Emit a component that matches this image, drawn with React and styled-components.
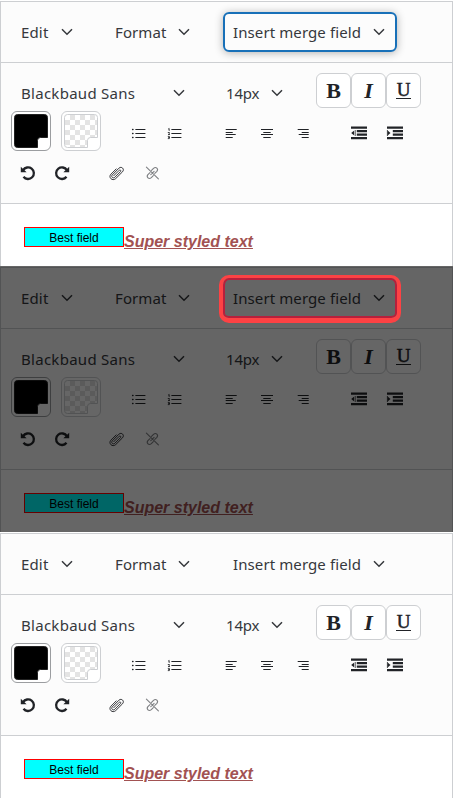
import React from 'react';
import styled, { createGlobalStyle, css } from 'styled-components';

const GlobalStyle = createGlobalStyle`
  * { box-sizing: border-box; }
  body { margin: 0; background: #fff; overflow: hidden; }
`;

const Page = styled.main`
  width: 453px;
  height: 798px;
  overflow: hidden;
  font-family: 'Noto Sans', 'Open Sans', sans-serif;
  color: #212327;
`;

const Panel = styled.section`
  position: relative;
  height: 266px;
  padding-top: 1px;
`;

const Frame = styled.div`
  display: flex;
  flex-direction: column;
  height: 265px;
  border: solid #cdcfd2;
  border-width: 1px 1px 0;
`;

const MenuBar = styled.div`
  display: flex;
  align-items: center;
  height: 61px;
  padding-left: 10px;
  background: #fcfcfc;
  border-bottom: 1px solid #cdcfd2;
`;

const MenuButton = styled.button`
  display: flex;
  align-items: center;
  justify-content: space-between;
  flex: none;
  width: ${(p) => p.$width}px;
  height: 40px;
  margin: 0 ${(p) => p.$after || 0}px 0 0;
  padding: 0 10px 0 8px;
  border: 2px solid transparent;
  border-radius: 6px;
  background: none;
  color: #36383c;
  font: 400 15px/20px 'Noto Sans', 'Open Sans', sans-serif;
  letter-spacing: ${(p) => p.$tracking || 0}px;
  white-space: nowrap;
  ${(p) => p.$focused && css`
    border-color: #1870b8;
    box-shadow: 0 1px 8px rgba(0, 0, 0, 0.3);
  `}
`;

const Toolbar = styled.div`
  height: 141px;
  padding: 11px 0 0 10px;
  background: #fcfcfc;
  border-bottom: 1px solid #cdcfd2;
`;

const FontRow = styled.div`
  display: flex;
  align-items: center;
  height: 38px;
  margin-bottom: -1px;
`;

const FormatGroup = styled.div`
  display: flex;
  height: 35px;
  margin: -5px 0 0 21px;
`;

const FormatButton = styled.button`
  width: 35px;
  height: 35px;
  padding: 0;
  border: 1px solid #cdcfd2;
  border-radius: 6px;
  background: #fff;
  color: #212327;
  font: ${(p) => p.$face} 'Liberation Serif', serif;
  -webkit-text-stroke: ${(p) => p.$stroke || 0}px #212327;
`;

const Underlined = styled.span`
  display: block;
  width: 15px;
  height: 18px;
  margin: -2px auto 0;
  border-bottom: 1px solid #212327;
  line-height: 17px;
  text-align: center;
`;

const ToolRow = styled.div`
  display: flex;
  align-items: center;
  height: 40px;
`;

const Tool = styled.button`
  display: flex;
  flex: none;
  width: 36px;
  height: 36px;
  margin: 0 0 0 ${(p) => p.$before || 0}px;
  padding: 12px 10px 8px;
  border: 0;
  background: none;
  color: ${(p) => (p.$muted ? '#7d7f82' : '#212327')};
`;

const SwatchButton = styled.button`
  flex: none;
  width: 40px;
  height: 40px;
  margin: 0 10px 0 0;
  padding: 2px;
  border: 1px solid ${(p) => (p.$filled ? '#9b9da0' : '#cdcfd2')};
  border-radius: 6px;
  background: #fff;
`;

const Editor = styled.div`
  display: flex;
  align-items: flex-start;
  flex: 1;
  padding: 23px 0 0 23px;
  background: #fff;
  font-family: 'Liberation Sans', Arial, sans-serif;
`;

const MergeField = styled.span`
  width: 100px;
  height: 20px;
  border: 1px solid #f00;
  background: #0ff;
  color: #000;
  font-size: 12px;
  line-height: 20px;
  text-align: center;
`;

const StyledText = styled.span`
  margin-top: 5px;
  color: #a25252;
  font-size: 16px;
  font-style: italic;
  font-weight: 700;
  line-height: 19px;
  text-decoration: underline;
`;

const Shade = styled.div`
  position: absolute;
  inset: 0;
  background: rgba(0, 0, 0, 0.6);
`;

const Highlight = styled.div`
  position: absolute;
  left: 219px;
  top: 9px;
  width: 182px;
  height: 48px;
  border: solid #fd4244;
  border-width: 3px 4px 5px;
  border-radius: 10px;
  box-shadow: inset 0 0 0 2px #b6203c;
`;

const Svg = styled.svg`
  display: block;
  flex: none;
  overflow: visible;
`;

const Chevron = () => (
  <Svg width="12" height="8" viewBox="0 0 12 8" fill="none" stroke="currentColor" strokeWidth="1.5">
    <path d="M1 1.3l5 5 5-5" />
  </Svg>
);

const Icon = ({ children }) => (
  <Svg width="16" height="16" viewBox="0 0 16 16" fill="none" stroke="currentColor" strokeLinecap="round" strokeLinejoin="round">
    {children}
  </Svg>
);

const listLines = <path d="M5.8 4.5H15M5.8 8.5H15M5.8 12.5H15" strokeWidth="1.1" />;

const BulletList = () => (
  <Icon>
    {listLines}
    <path d="M2.6 4.5h.4M2.6 8.5h.4M2.6 12.5h.4" strokeWidth="1.4" />
  </Icon>
);

const NumberList = () => (
  <Icon>
    {listLines}
    <path d="M2.4 4l.8-.5v2M2.2 7.5h1.2v1L2.2 9.5h1.4M2.2 11.4h1.2v2.2H2.2M2.6 12.5h.8" strokeWidth=".85" />
  </Icon>
);

const AlignIcon = ({ d }) => (
  <Icon><path d={d} strokeWidth="1.1" strokeLinecap="butt" /></Icon>
);

const indentBars = (
  <path d="M0 2.6h16M5.8 6.1h10.2M5.8 9.6h10.2M0 13.1h16" strokeWidth="2.2" strokeLinecap="butt" />
);

const Outdent = () => (
  <Icon>
    {indentBars}
    <path d="M3.2 5.5v5L.2 8z" fill="currentColor" stroke="none" />
    <path d="M4.3 5v6" strokeWidth=".7" strokeLinecap="butt" />
  </Icon>
);

const Indent = () => (
  <Icon>
    {indentBars}
    <path d="M.6 5.5v5L3.5 8z" fill="currentColor" stroke="none" />
    <path d="M.4 5v6" strokeWidth=".8" strokeLinecap="butt" />
  </Icon>
);

const Undo = () => (
  <Icon>
    <path d="M3.1 5.2A5.8 5.8 0 1 1 3.5 11.8" strokeWidth="2.3" strokeLinecap="butt" />
    <path d="M.8 1.8v5.4h5.8L4.8 5.4 2.6 3.6z" fill="currentColor" stroke="none" />
  </Icon>
);

const Redo = () => (
  <Icon>
    <path d="M12.9 5.2A5.8 5.8 0 1 0 12.5 11.8" strokeWidth="2.3" strokeLinecap="butt" />
    <path d="M15.2 1.8v5.4H9.4l1.8-1.8 2.2-1.8z" fill="currentColor" stroke="none" />
  </Icon>
);

const Paperclip = () => (
  <Icon>
    <path
      d="M5.8 10.7l5.5-5.5c.8-.8 2.1.4 1.3 1.3l-5.8 5.8c-1.8 1.6-4.1-.6-2.5-2.4l6.6-6.7c2.5-2.4 6.1.9 3.6 3.6l-6.8 6.8c-3.3 3-7.8-1.2-4.7-4.5l5.2-5.2"
      strokeWidth=".9"
    />
  </Icon>
);

const Unlink = () => (
  <Icon>
    <path d="M2.4 2.2l12 11.7M7.5 5.3l2-2c2.5-2.1 5.3.6 3.4 3l-2.1 2.1M9.3 10.7l-2 2c-2.5 2.1-5.3-.6-3.4-3l2.1-2.1M10.1 6.4L6.8 9.6" strokeWidth="1.1" />
  </Icon>
);

const squares = [];
for (let row = 0; row < 7; row += 1) {
  for (let col = 0; col < 7; col += 1) {
    if ((row + col) % 2) squares.push([1 + col * 5, 1 + row * 5]);
  }
}

const swatchOutline = 'M3.5 .5h27q3 0 3 3v20h-7q-3 0-3 3v7h-20q-3 0-3-3v-27q0-3 3-3z';

const Swatch = ({ filled, clip }) => (
  <SwatchButton $filled={filled}>
    <Svg width="34" height="34" viewBox="0 0 34 34">
      <clipPath id={clip}><path d={swatchOutline} /></clipPath>
      <g clipPath={`url(#${clip})`}>
        {filled
          ? <rect width="34" height="34" fill="#000" />
          : squares.map(([x, y]) => <rect key={`${x}-${y}`} x={x} y={y} width="5" height="5" fill="#e4e4e4" />)}
      </g>
      <path d={swatchOutline} fill="none" stroke={filled ? '#222' : '#cdcfd2'} />
    </Svg>
  </SwatchButton>
);

function EditorPanel({ id, focused, shaded }) {
  return (
    <Panel>
      <Frame>
        <MenuBar>
          <MenuButton $width={74} $after={20} $tracking={0.15}>Edit<Chevron /></MenuButton>
          <MenuButton $width={97} $after={21} $tracking={0.1}>Format<Chevron /></MenuButton>
          <MenuButton $width={174} $focused={focused} $tracking={0.1}>Insert merge field<Chevron /></MenuButton>
        </MenuBar>
        <Toolbar>
          <FontRow>
            <MenuButton $width={186} $after={19} $tracking={0.28}>Blackbaud Sans<Chevron /></MenuButton>
            <MenuButton $width={79} $tracking={-0.2}>14px<Chevron /></MenuButton>
            <FormatGroup>
              <FormatButton $face="700 22px/32px">B</FormatButton>
              <FormatButton $face="italic 700 22px/32px">I</FormatButton>
              <FormatButton $face="400 19px/16px" $stroke={0.5}><Underlined>U</Underlined></FormatButton>
            </FormatGroup>
          </FontRow>
          <ToolRow>
            <Swatch filled clip={`${id}-text`} />
            <Swatch clip={`${id}-back`} />
            <Tool $before={9}><BulletList /></Tool>
            <Tool><NumberList /></Tool>
            <Tool $before={21}><AlignIcon d="M2.7 4.5h11M2.7 7.5h7M2.7 9.5h10M2.7 12.5h7" /></Tool>
            <Tool><AlignIcon d="M2 4.5h12M4.3 7.5h7.4M2 9.5h12M4.3 12.5h7.4" /></Tool>
            <Tool><AlignIcon d="M2.7 4.5h11M6.7 7.5h7M3.7 9.5h10M6.7 12.5h7" /></Tool>
            <Tool $before={20}><Outdent /></Tool>
            <Tool><Indent /></Tool>
          </ToolRow>
          <ToolRow>
            <Tool $before={-1}><Undo /></Tool>
            <Tool $before={-2}><Redo /></Tool>
            <Tool $before={18}><Paperclip /></Tool>
            <Tool $muted><Unlink /></Tool>
          </ToolRow>
        </Toolbar>
        <Editor>
          <MergeField>Best field</MergeField>
          <StyledText>Super styled text</StyledText>
        </Editor>
      </Frame>
      {shaded && <><Shade /><Highlight /></>}
    </Panel>
  );
}

export default function App() {
  return (
    <Page>
      <GlobalStyle />
      <EditorPanel id="first" focused />
      <EditorPanel id="second" shaded />
      <EditorPanel id="third" />
    </Page>
  );
}
